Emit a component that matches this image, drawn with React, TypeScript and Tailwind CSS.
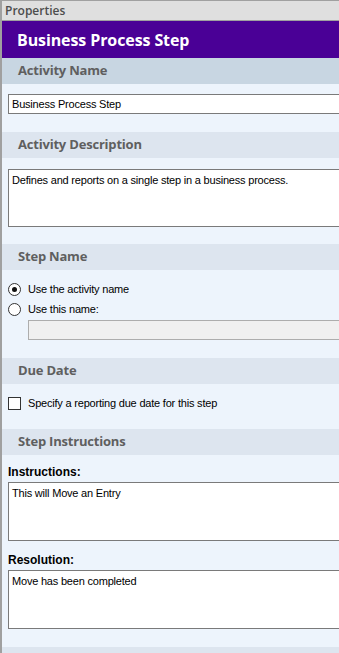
import React from "react";

const ui = { fontFamily: '"Open Sans", "Noto Sans", sans-serif' };
const ms = { fontFamily: '"Liberation Sans", Arial, sans-serif' };

function SectionHeader({ title, dark }: { title: string; dark?: boolean }) {
  return (
    <div
      className={`flex h-[26px] items-center pl-[16px] text-[13px] font-bold tracking-[-0.2px] text-[#5f5f5f] ${
        dark ? "bg-[#c8d6e2]" : "bg-[#dde5ef]"
      }`}
      style={ui}
    >
      {title}
    </div>
  );
}

function Radio({ checked, label }: { checked?: boolean; label: string }) {
  return (
    <div className="flex h-[20px] items-center gap-[7px] pl-[6px]">
      <span className="flex h-[13px] w-[13px] items-center justify-center rounded-full border border-[#333] bg-white">
        {checked && <span className="h-[5px] w-[5px] rounded-full bg-[#111]" />}
      </span>
      <span className="text-[11px] tracking-[-0.2px] text-black" style={ms}>
        {label}
      </span>
    </div>
  );
}

export default function App() {
  return (
    <div className="h-[653px] w-[339px] overflow-hidden border-l-2 border-[#a0a0a0] bg-[#edf4fc]">
      {/* panel title */}
      <div
        className="flex h-[21px] items-center border-y border-[#a0a0a0] bg-[#dfdfdf] pl-[3px] text-[12px] font-semibold text-[#4d4d4d]"
        style={ui}
      >
        Properties
      </div>
      <div
        className="flex h-[37px] items-center bg-[#4a0096] pl-[15px] text-[16px] font-bold tracking-[-0.1px] text-white"
        style={ui}
      >
        Business Process Step
      </div>

      <SectionHeader title="Activity Name" dark />
      <div className="pb-[18px] pl-[6px] pt-[10px]">
        <div
          className="flex h-[20px] items-center border border-r-0 border-[#7a7a7a] bg-white pl-[3px] text-[11px] tracking-[-0.2px] text-black"
          style={ms}
        >
          Business Process Step
        </div>
      </div>

      <SectionHeader title="Activity Description" />
      <div className="pb-[17px] pl-[6px] pt-[11px]">
        <div
          className="h-[58px] border border-r-0 border-[#7a7a7a] bg-white pl-[3px] pt-[2px] text-[11px] tracking-[-0.2px] text-black"
          style={ms}
        >
          Defines and reports on a single step in a business process.
        </div>
      </div>

      <SectionHeader title="Step Name" />
      <div className="pb-[18px] pt-[9px]">
        <Radio checked label="Use the activity name" />
        <Radio label="Use this name:" />
        <div className="ml-[26px] mt-[1px] h-[20px] border border-r-0 border-[#adadad] bg-[#f0f0f0]" />
      </div>

      <SectionHeader title="Due Date" />
      <div className="h-[45px] pt-[11px]">
        <label className="flex items-center gap-[7px] pl-[6px]">
          <span className="h-[13px] w-[13px] border border-[#333] bg-white" />
          <span className="text-[11px] tracking-[-0.2px] text-black" style={ms}>
            Specify a reporting due date for this step
          </span>
        </label>
      </div>

      <SectionHeader title="Step Instructions" />
      <div className="pb-[18px] pl-[6px] pt-[10px]">
        <div className="text-[12px] font-bold leading-[15px] text-black" style={ms}>
          Instructions:
        </div>
        <div
          className="mt-[2px] h-[59px] border border-r-0 border-[#7a7a7a] bg-white pl-[3px] pt-[2px] text-[11px] tracking-[-0.2px] text-black"
          style={ms}
        >
          This will Move an Entry
        </div>
        <div className="mt-[12px] text-[12px] font-bold leading-[15px] text-black" style={ms}>
          Resolution:
        </div>
        <div
          className="mt-[2px] h-[59px] border border-r-0 border-[#7a7a7a] bg-white pl-[3px] pt-[2px] text-[11px] tracking-[-0.2px] text-black"
          style={ms}
        >
          Move has been completed
        </div>
      </div>

      <div className="h-[26px] bg-[#dde5ef]" />
    </div>
  );
}
